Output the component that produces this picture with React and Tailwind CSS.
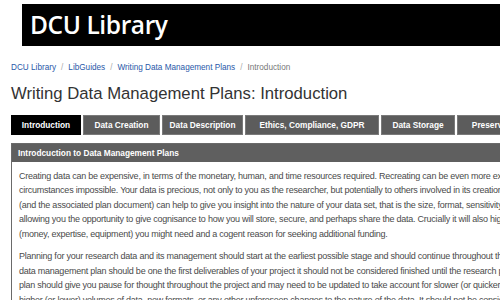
import React from 'react';

const crumbs = ['DCU Library', 'LibGuides', 'Writing Data Management Plans'];

const tabs = [
  { label: 'Introduction', width: 'w-[70px]', active: true },
  { label: 'Data Creation', width: 'w-[77px]' },
  { label: 'Data Description', width: 'w-[81px]' },
  { label: 'Ethics, Compliance, GDPR', width: 'w-[134px]' },
  { label: 'Data Storage', width: 'w-[74px]' },
  { label: 'Preservation', width: 'w-[80px]' },
];

const paragraphs = [
  [
    'Creating data can be expensive, in terms of the monetary, human, and time resources required. Recreating can be even more expensive and in some',
    'circumstances impossible. Your data is precious, not only to you as the researcher, but potentially to others involved in its creation. A data management plan',
    '(and the associated plan document) can help to give you insight into the nature of your data set, that is the size, format, sensitivity and so on, while',
    'allowing you the opportunity to give cognisance to how you will store, secure, and perhaps share the data. Crucially it will also highlight the resources',
    '(money, expertise, equipment) you might need and a cogent reason for seeking additional funding.',
  ],
  [
    'Planning for your research data and its management should start at the earliest possible stage and should continue throughout the lifecycle of the project. While a',
    'data management plan should be one the first deliverables of your project it should not be considered finished until the research project is complete. The',
    'plan should give you pause for thought throughout the project and may need to be updated to take account for slower (or quicker) progress,',
    'higher (or lower) volumes of data, new formats, or any other unforeseen changes to the nature of the data. It should not be considered a static document.',
  ],
];

export default function App() {
  return (
    <div className="w-[500px] h-[300px] overflow-hidden bg-white [font-family:'Liberation_Sans',Arial,sans-serif]">
      <div className="w-[820px]">
        {/* Banner */}
        <div className="pt-[4px] pl-[22px]">
          <div className="h-[42px] bg-black flex items-center pl-[8px]">
            <span className="text-white text-[24.5px] font-semibold [font-family:'Open_Sans',sans-serif] tracking-[-0.4px] leading-none">
              DCU Library
            </span>
          </div>
        </div>

        <div className="pl-[11px]">
          {/* Breadcrumb */}
          <div className="mt-[18px] flex items-center text-[8.2px] leading-none">
            {crumbs.map((c) => (
              <React.Fragment key={c}>
                <span className="text-[#2958a8]">{c}</span>
                <span className="text-[#aaaaaa] mx-[5px]">/</span>
              </React.Fragment>
            ))}
            <span className="text-[#777777]">Introduction</span>
          </div>

          {/* Title */}
          <h1 className="mt-[14px] text-[16.7px] leading-none text-[#333333]">
            Writing Data Management Plans: Introduction
          </h1>

          {/* Tabs */}
          <div className="mt-[12px] flex gap-[2px]">
            {tabs.map((t) => (
              <div
                key={t.label}
                className={`${t.width} h-[20px] flex items-center justify-center text-[8.3px] font-bold text-white whitespace-nowrap border ${
                  t.active ? 'bg-black border-black' : 'bg-[#5c5c5c] border-[#7a7a7a]'
                }`}
              >
                {t.label}
              </div>
            ))}
          </div>

          {/* Panel */}
          <div className="mt-[8px] border border-[#6a6a6a]">
            <div className="h-[18px] bg-[#5f5f5f] flex items-center pl-[6px] text-[8.3px] font-bold text-white">
              Introdcuction to Data Management Plans
            </div>
            <div className="px-[7px] pt-[7px] text-[9px] tracking-[-0.24px] leading-[14.5px] text-[#4a4a4a]">
              {paragraphs.map((p, i) => (
                <div key={i} className="mb-[8px]">
                  {p.map((line) => (
                    <div key={line} className="whitespace-nowrap">
                      {line}
                    </div>
                  ))}
                </div>
              ))}
            </div>
          </div>
        </div>
      </div>
    </div>
  );
}
